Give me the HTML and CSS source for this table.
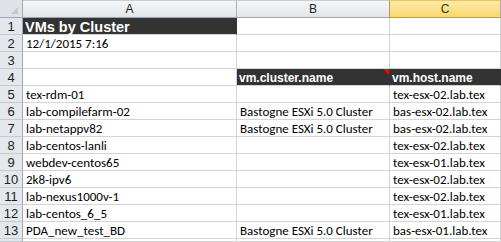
FILE: index.html
```html
<!DOCTYPE html>
<html>
<head>
<meta charset="utf-8">
<link rel="stylesheet" href="styles.css">
</head>
<body>
<div class="sheet">
  <div class="corner"><span class="corner-tri"></span></div>
  <div class="colhead">A</div>
  <div class="colhead">B</div>
  <div class="colhead sel">C</div>

  <div class="rowhead">1</div>
  <div class="cell dark title">VMs by Cluster</div>
  <div class="cell"></div>
  <div class="cell"></div>

  <div class="rowhead">2</div>
  <div class="cell date">12/1/2015 7:16</div>
  <div class="cell"></div>
  <div class="cell"></div>

  <div class="rowhead">3</div>
  <div class="cell"></div>
  <div class="cell"></div>
  <div class="cell"></div>

  <div class="rowhead">4</div>
  <div class="cell"></div>
  <div class="cell dark hdr">vm.cluster.name<span class="comment"></span></div>
  <div class="cell dark hdr">vm.host.name</div>

  <div class="rowhead">5</div>
  <div class="cell">tex-rdm-01</div>
  <div class="cell"></div>
  <div class="cell">tex-esx-02.lab.tex</div>

  <div class="rowhead">6</div>
  <div class="cell">lab-compilefarm-02</div>
  <div class="cell">Bastogne ESXi 5.0 Cluster</div>
  <div class="cell">bas-esx-02.lab.tex</div>

  <div class="rowhead">7</div>
  <div class="cell">lab-netappv82</div>
  <div class="cell">Bastogne ESXi 5.0 Cluster</div>
  <div class="cell">bas-esx-02.lab.tex</div>

  <div class="rowhead">8</div>
  <div class="cell">lab-centos-lanli</div>
  <div class="cell"></div>
  <div class="cell">tex-esx-02.lab.tex</div>

  <div class="rowhead">9</div>
  <div class="cell">webdev-centos65</div>
  <div class="cell"></div>
  <div class="cell">tex-esx-01.lab.tex</div>

  <div class="rowhead">10</div>
  <div class="cell">2k8-ipv6</div>
  <div class="cell"></div>
  <div class="cell">tex-esx-02.lab.tex</div>

  <div class="rowhead">11</div>
  <div class="cell">lab-nexus1000v-1</div>
  <div class="cell"></div>
  <div class="cell">tex-esx-02.lab.tex</div>

  <div class="rowhead">12</div>
  <div class="cell">lab-centos_6_5</div>
  <div class="cell"></div>
  <div class="cell">tex-esx-01.lab.tex</div>

  <div class="rowhead">13</div>
  <div class="cell">PDA_new_test_BD</div>
  <div class="cell">Bastogne ESXi 5.0 Cluster</div>
  <div class="cell">bas-esx-01.lab.tex</div>

  <div class="rowhead"></div>
  <div class="cell"></div>
  <div class="cell"></div>
  <div class="cell"></div>
</div>
</body>
</html>
```

FILE: styles.css
```css
html, body {
  margin: 0;
  padding: 0;
  background: #ffffff;
  overflow: hidden;
}

.sheet {
  display: grid;
  width: 501px;
  height: 242px;
  overflow: hidden;
  grid-template-columns: 23px 214px 153px 1fr;
  grid-template-rows: 18px repeat(13, 17px) 3px;
  font-family: Calibri, Carlito, Lato, "Liberation Sans", sans-serif;
  font-size: 13px;
  color: #000;
}

.corner {
  position: relative;
  background: #dfe3e8;
  border-right: 1px solid #9ea6b0;
  border-bottom: 1px solid #9ea6b0;
  box-sizing: border-box;
}

.corner-tri {
  position: absolute;
  right: 4px;
  bottom: 3px;
  width: 0;
  height: 0;
  border-left: 7px solid transparent;
  border-bottom: 7px solid #c4c9cf;
}

.colhead {
  box-sizing: border-box;
  background: linear-gradient(#f4f6f8, #e1e5ea);
  border-right: 1px solid #a9b0b8;
  border-bottom: 1px solid #9ea6b0;
  border-top: 1px solid #c8cdd3;
  text-align: center;
  font-family: "Liberation Sans", Arial, sans-serif;
  font-size: 12px;
  line-height: 16px;
  color: #222;
}

.colhead.sel {
  background: linear-gradient(#fdeaa8, #f9d86c);
  border-left: 1px solid #c69a3c;
  border-bottom: 1px solid #c69a3c;
  border-top: 1px solid #e8c36a;
  margin-left: -1px;
  color: #2d3a2a;
}

.rowhead {
  box-sizing: border-box;
  background: #e4e8ed;
  border-right: 1px solid #9ea6b0;
  border-bottom: 1px solid #c5cad1;
  text-align: center;
  font-family: "Liberation Sans", Arial, sans-serif;
  font-size: 13px;
  line-height: 17px;
  color: #222;
}

.cell {
  position: relative;
  box-sizing: border-box;
  border-right: 1px solid #d4d4d4;
  border-bottom: 1px solid #d4d4d4;
  padding-left: 3px;
  line-height: 18px;
  white-space: nowrap;
}

.cell.dark {
  background: #333333;
  color: #ffffff;
  font-family: "Liberation Sans", Arial, sans-serif;
  font-weight: bold;
  border-right-color: #333333;
}

.cell.title {
  font-size: 14.5px;
  padding-left: 2px;
}

.cell.hdr {
  font-size: 12px;
  padding-left: 2px;
}

.comment {
  position: absolute;
  top: 0;
  right: 0;
  width: 0;
  height: 0;
  border-left: 6px solid transparent;
  border-top: 6px solid #ff0000;
}
```
